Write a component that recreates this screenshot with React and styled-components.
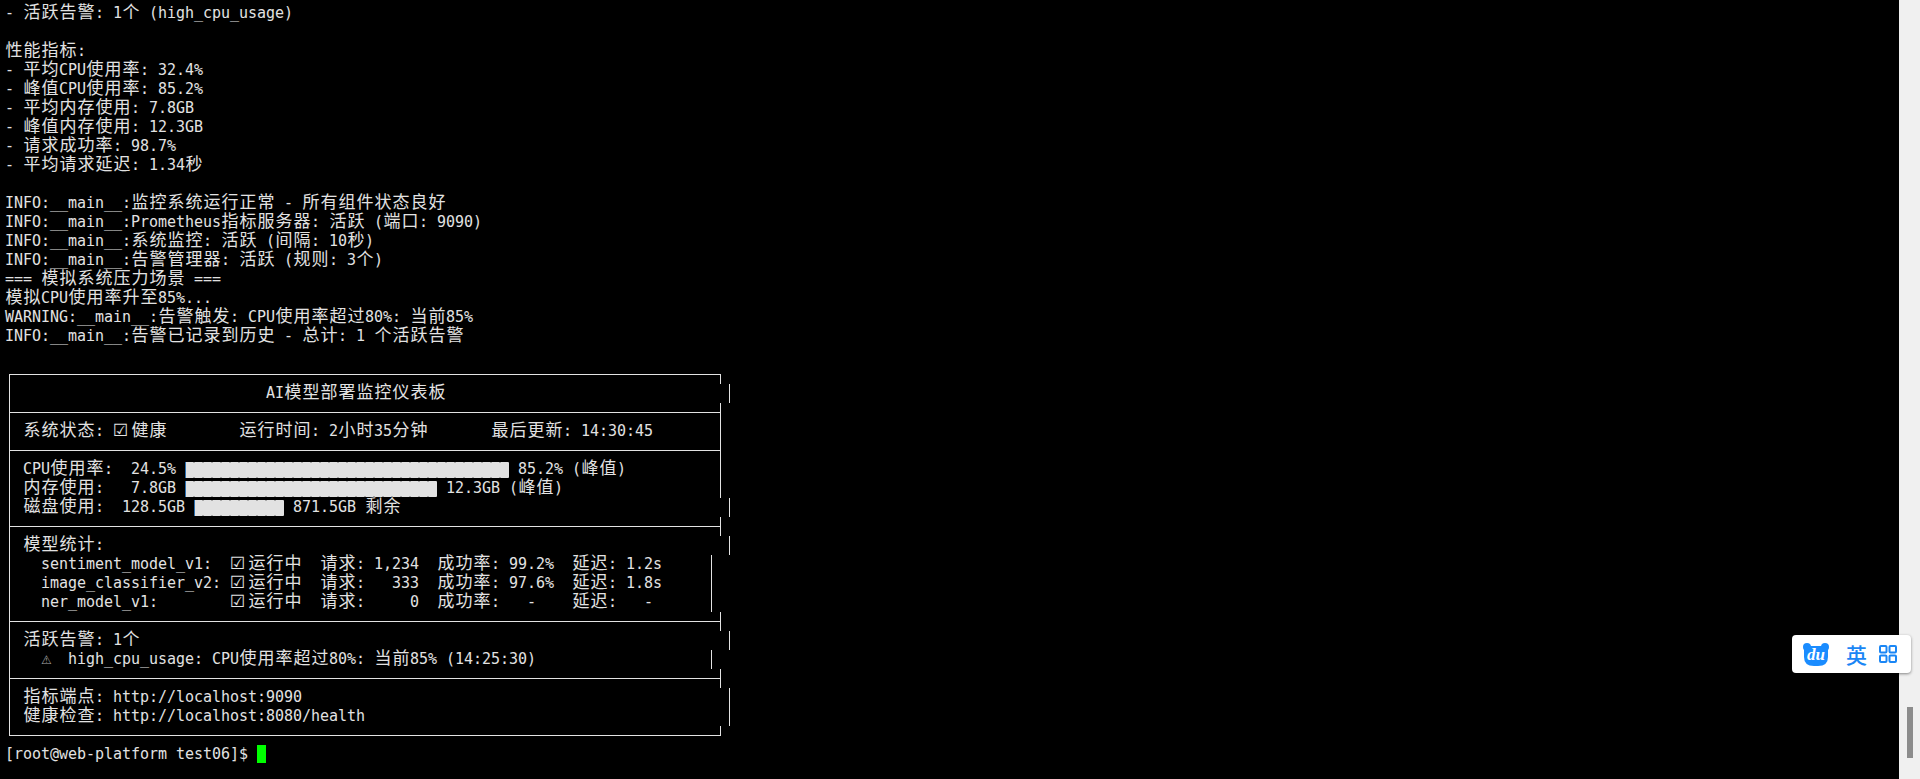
import React from 'react';
import styled, { createGlobalStyle } from 'styled-components';

const GlobalStyle = createGlobalStyle`
  html, body {
    margin: 0;
    height: 100%;
    overflow: hidden;
    background: #000;
  }
`

const Screen = styled.div`
  display: flex;
  width: 1920px;
  height: 779px;
  position: relative;
  overflow: hidden;
`

const Terminal = styled.div`
  flex: 1;
  background: #000;
  color: #e2e2e2;
  padding: 4px 0 0 5px;
  font-family: "DejaVu Sans Mono", "Liberation Mono", monospace;
  font-size: 15px;
  line-height: 19px;
  letter-spacing: -0.03px;
`

const Line = styled.div`
  height: 19px;
  white-space: pre;
`

// line-height 0：宽字符不能把这一行的基线往下推
const Wide = styled.span`
  font-family: "Noto Sans CJK SC", "DejaVu Sans", sans-serif;
  font-size: 17px;
  line-height: 0;
  letter-spacing: 1px;
  margin-left: 0.5px;
  margin-right: -0.5px;
`

const Mark = styled.span`
  display: inline-block;
  width: 18px;
  font-family: "DejaVu Sans", sans-serif;
  font-size: 17px;
  line-height: 0;
  letter-spacing: 0;
`

const Warn = styled.span`
  display: inline-block;
  width: 9px;
  font-family: "DejaVu Sans", sans-serif;
  font-size: 12px;
  line-height: 0;
  letter-spacing: 0;
  color: #a8a8a8;
`

// 一行里的 █ 连成一条，上下边留着字符之间的缝
const Bar = styled.span`
  display: inline-block;
  vertical-align: top;
  margin-top: 2px;
  width: ${(p) => p.$cols * 9}px;
  height: 16px;
  background-color: #e2e2e2;
  background-image:
    repeating-linear-gradient(90deg, #e2e2e2 0 7px, #a8a8a8 7px 9px),
    repeating-linear-gradient(90deg, #e2e2e2 0 7px, #a8a8a8 7px 9px);
  background-size: 100% 1px;
  background-position: top, bottom;
  background-repeat: no-repeat;
  border-left: 1px solid #2a6fb0;
  box-sizing: border-box;
`

const Cursor = styled.span`
  display: inline-block;
  vertical-align: top;
  width: 9px;
  height: 18px;
  background: #00ff00;
`

const Panel = styled.div`
  margin: 9px 0 9px 4px;
  border-left: 1px solid #e2e2e2;
`

const PanelRow = styled.div`
  display: flex;
  height: ${(p) => (p.$cap ? 10 : 19)}px;
`

const PanelBody = styled.div`
  flex: none;
  width: ${(p) => p.$col * 9 - 1}px;
`

const PanelText = styled(Line)`
  padding-left: 4px;
`

const Rule = styled.div`
  height: 1px;
  margin-top: ${(p) => p.$offset}px;
  background: #e2e2e2;
`

const Edge = styled.div`
  flex: none;
  width: 1px;
  background: #e2e2e2;
`

const Scrollbar = styled.div`
  flex: none;
  width: 21px;
  background: #f0f0f0;
  padding: 707px 0 0 8px;
  box-sizing: border-box;
`

const Thumb = styled.div`
  width: 6px;
  height: 51px;
  background: #8c8c8c;
`

const Translator = styled.div`
  position: absolute;
  left: 1792px;
  top: 635px;
  width: 119px;
  height: 38px;
  box-sizing: border-box;
  padding: 0 14px 0 11px;
  display: flex;
  align-items: center;
  justify-content: space-between;
  background: #fff;
  border-radius: 4px;
  box-shadow: 0 1px 3px rgba(0, 0, 0, 0.45);
  color: #1a86f5;
`

const TranslatorLabel = styled.span`
  font-family: "Noto Sans CJK SC", sans-serif;
  font-size: 21px;
  font-weight: 500;
  line-height: 1;
  margin-left: 5px;
`

const Text = ({ children }) => {
  const parts = children.split(/([\u4e00-\u9fff]+|☑|⚠)/)
  return parts.map((part, i) => {
    if (part === '☑') return <Mark key={i}>{part}</Mark>
    if (part === '⚠') return <Warn key={i}>{part}</Warn>
    if (/^[\u4e00-\u9fff]/.test(part)) return <Wide key={i}>{part}</Wide>
    return part
  })
}

const DuLogo = () => (
  <svg width="26" height="23" viewBox="0 0 26 23">
    <circle cx="4" cy="4" r="4" fill="#1a8cff" />
    <circle cx="22" cy="4" r="4" fill="#1a8cff" />
    <path d="M3 3 H23 Q25 3 25 6 V14 Q25 23 15 23 H11 Q1 23 1 14 V6 Q1 3 3 3 Z" fill="#1a8cff" />
    <text x="13" y="17" textAnchor="middle" fill="#fff" fontFamily="'Liberation Serif', serif" fontStyle="italic" fontWeight="700" fontSize="17">du</text>
  </svg>
)

const GridIcon = () => (
  <svg width="18" height="18" viewBox="0 0 18 18" fill="none" stroke="#1a86f5" strokeWidth="2">
    <rect x="1" y="1" width="6.5" height="6.5" rx="1" />
    <rect x="10.5" y="1" width="6.5" height="6.5" rx="1" />
    <rect x="1" y="10.5" width="6.5" height="6.5" rx="1" />
    <rect x="10.5" y="10.5" width="6.5" height="6.5" rx="1" />
  </svg>
)

const logLines = [
  '- 活跃告警: 1个 (high_cpu_usage)',
  '',
  '性能指标:',
  '- 平均CPU使用率: 32.4%',
  '- 峰值CPU使用率: 85.2%',
  '- 平均内存使用: 7.8GB',
  '- 峰值内存使用: 12.3GB',
  '- 请求成功率: 98.7%',
  '- 平均请求延迟: 1.34秒',
  '',
  'INFO:__main__:监控系统运行正常 - 所有组件状态良好',
  'INFO:__main__:Prometheus指标服务器: 活跃 (端口: 9090)',
  'INFO:__main__:系统监控: 活跃 (间隔: 10秒)',
  'INFO:__main__:告警管理器: 活跃 (规则: 3个)',
  '=== 模拟系统压力场景 ===',
  '模拟CPU使用率升至85%...',
  'WARNING:__main__:告警触发: CPU使用率超过80%: 当前85%',
  'INFO:__main__:告警已记录到历史 - 总计: 1 个活跃告警',
]

const Row = ({ col, children }) => (
  <PanelRow>
    <PanelBody $col={col}>
      <PanelText>{children}</PanelText>
    </PanelBody>
    <Edge />
  </PanelRow>
)

const Divider = ({ cap, offset = 9 }) => (
  <PanelRow $cap={cap}>
    <PanelBody $col={79}>
      <Rule $offset={offset} />
    </PanelBody>
    <Edge />
  </PanelRow>
)

export default function App() {
  return (
    <Screen>
      <GlobalStyle />
      <Terminal>
        {logLines.map((line, i) => <Line key={i}><Text>{line}</Text></Line>)}
        <Line />

        <Panel>
          <Divider cap offset={0} />
          <Row col={80}><Text>{'                            AI模型部署监控仪表板'}</Text></Row>
          <Divider />
          <Row col={79}><Text>{' 系统状态: ☑健康        运行时间: 2小时35分钟       最后更新: 14:30:45'}</Text></Row>
          <Divider />
          <Row col={79}><Text>{' CPU使用率:  24.5% '}</Text><Bar $cols={36} /><Text>{' 85.2% (峰值)'}</Text></Row>
          <Row col={79}><Text>{' 内存使用:   7.8GB '}</Text><Bar $cols={28} /><Text>{' 12.3GB (峰值)'}</Text></Row>
          <Row col={80}><Text>{' 磁盘使用:  128.5GB '}</Text><Bar $cols={10} /><Text>{' 871.5GB 剩余'}</Text></Row>
          <Divider />
          <Row col={80}><Text>{' 模型统计:'}</Text></Row>
          <Row col={78}><Text>{'   sentiment_model_v1:  ☑运行中  请求: 1,234  成功率: 99.2%  延迟: 1.2s'}</Text></Row>
          <Row col={78}><Text>{'   image_classifier_v2: ☑运行中  请求:   333  成功率: 97.6%  延迟: 1.8s'}</Text></Row>
          <Row col={78}><Text>{'   ner_model_v1:        ☑运行中  请求:     0  成功率:   -    延迟:   -'}</Text></Row>
          <Divider />
          <Row col={80}><Text>{' 活跃告警: 1个'}</Text></Row>
          <Row col={78}><Text>{'   ⚠  high_cpu_usage: CPU使用率超过80%: 当前85% (14:25:30)'}</Text></Row>
          <Divider />
          <Row col={80}><Text>{' 指标端点: http://localhost:9090'}</Text></Row>
          <Row col={80}><Text>{' 健康检查: http://localhost:8080/health'}</Text></Row>
          <Divider cap />
        </Panel>

        <Line>[root@web-platform test06]$ <Cursor /></Line>
      </Terminal>
      <Scrollbar><Thumb /></Scrollbar>
      <Translator>
        <DuLogo />
        <TranslatorLabel>英</TranslatorLabel>
        <GridIcon />
      </Translator>
    </Screen>
  )
}
